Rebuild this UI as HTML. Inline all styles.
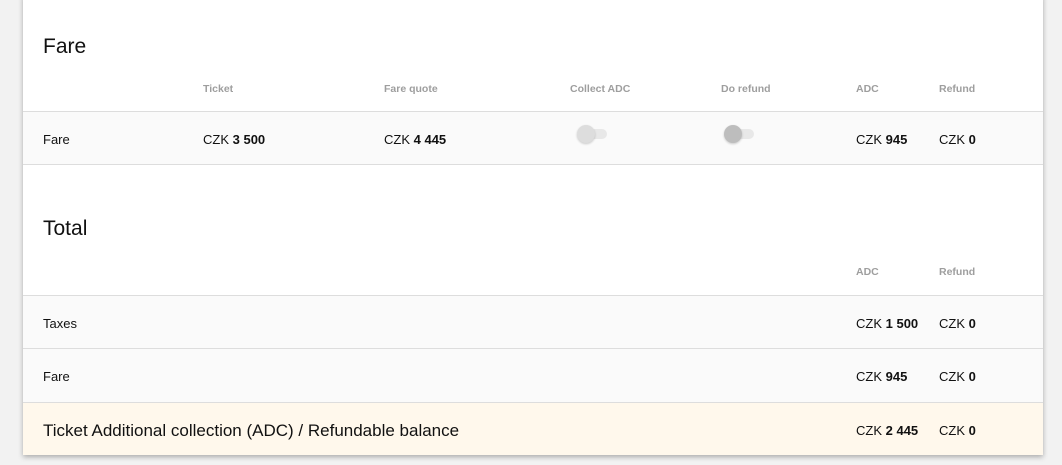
<!DOCTYPE html><html><head><style>
body{margin:0;width:1062px;height:465px;background:#f2f2f2;font-family:"Liberation Sans",Arial,sans-serif;overflow:hidden;position:relative}
.card{position:absolute;left:23px;top:-5px;width:1020px;height:460px;background:#fff;box-shadow:0 2px 5px rgba(0,0,0,.3)}
.a{position:absolute;white-space:nowrap}
.t{font-size:21px;color:#111;left:20px}
.h{font-size:10.5px;font-weight:bold;color:#9e9e9e}
.row{position:absolute;left:0;width:1020px;background:#fafafa;border-top:1px solid #ddd;border-bottom:1px solid #ddd}
.c{font-size:13px;color:#111}
.c b{color:#111}
.tr{position:absolute;width:26px;height:10px;border-radius:5px;background:#e8e8e8}
.th{position:absolute;width:18px;height:18px;border-radius:9px;box-shadow:0 1px 2px rgba(0,0,0,.2)}
</style></head><body><div class="card">
<div class="a t" style="top:40px">Fare</div>
<div class="a h" style="left:180px;top:88px">Ticket</div>
<div class="a h" style="left:361px;top:88px">Fare quote</div>
<div class="a h" style="left:547px;top:88px">Collect ADC</div>
<div class="a h" style="left:698px;top:88px">Do refund</div>
<div class="a h" style="left:833px;top:88px">ADC</div>
<div class="a h" style="left:916px;top:88px">Refund</div>
<div class="row" style="top:116px;height:52px"></div>
<div class="a c" style="left:20px;top:137px">Fare</div>
<div class="a c" style="left:180px;top:137px">CZK <b>3 500</b></div>
<div class="a c" style="left:361px;top:137px">CZK <b>4 445</b></div>
<div class="tr" style="left:558px;top:134px"></div><div class="th" style="left:554px;top:130px;background:#ddd"></div>
<div class="tr" style="left:705px;top:134px"></div><div class="th" style="left:701px;top:130px;background:#bdbdbd"></div>
<div class="a c" style="left:833px;top:137px">CZK <b>945</b></div>
<div class="a c" style="left:916px;top:137px">CZK <b>0</b></div>
<div class="a t" style="top:222px">Total</div>
<div class="a h" style="left:833px;top:271px">ADC</div>
<div class="a h" style="left:916px;top:271px">Refund</div>
<div class="row" style="top:300px;height:106px"></div>
<div style="position:absolute;left:0;top:353px;width:1020px;border-top:1px solid #ddd"></div>
<div class="a c" style="left:20px;top:321px">Taxes</div>
<div class="a c" style="left:833px;top:321px">CZK <b>1 500</b></div>
<div class="a c" style="left:916px;top:321px">CZK <b>0</b></div>
<div class="a c" style="left:20px;top:374px">Fare</div>
<div class="a c" style="left:833px;top:374px">CZK <b>945</b></div>
<div class="a c" style="left:916px;top:374px">CZK <b>0</b></div>
<div style="position:absolute;left:0;top:408px;width:1020px;height:52px;background:#fff8ec"></div>
<div class="a" style="left:20px;top:426px;font-size:17px;color:#111">Ticket Additional collection (ADC) / Refundable balance</div>
<div class="a c" style="left:833px;top:428px">CZK <b>2 445</b></div>
<div class="a c" style="left:916px;top:428px">CZK <b>0</b></div>
</div></body></html>
